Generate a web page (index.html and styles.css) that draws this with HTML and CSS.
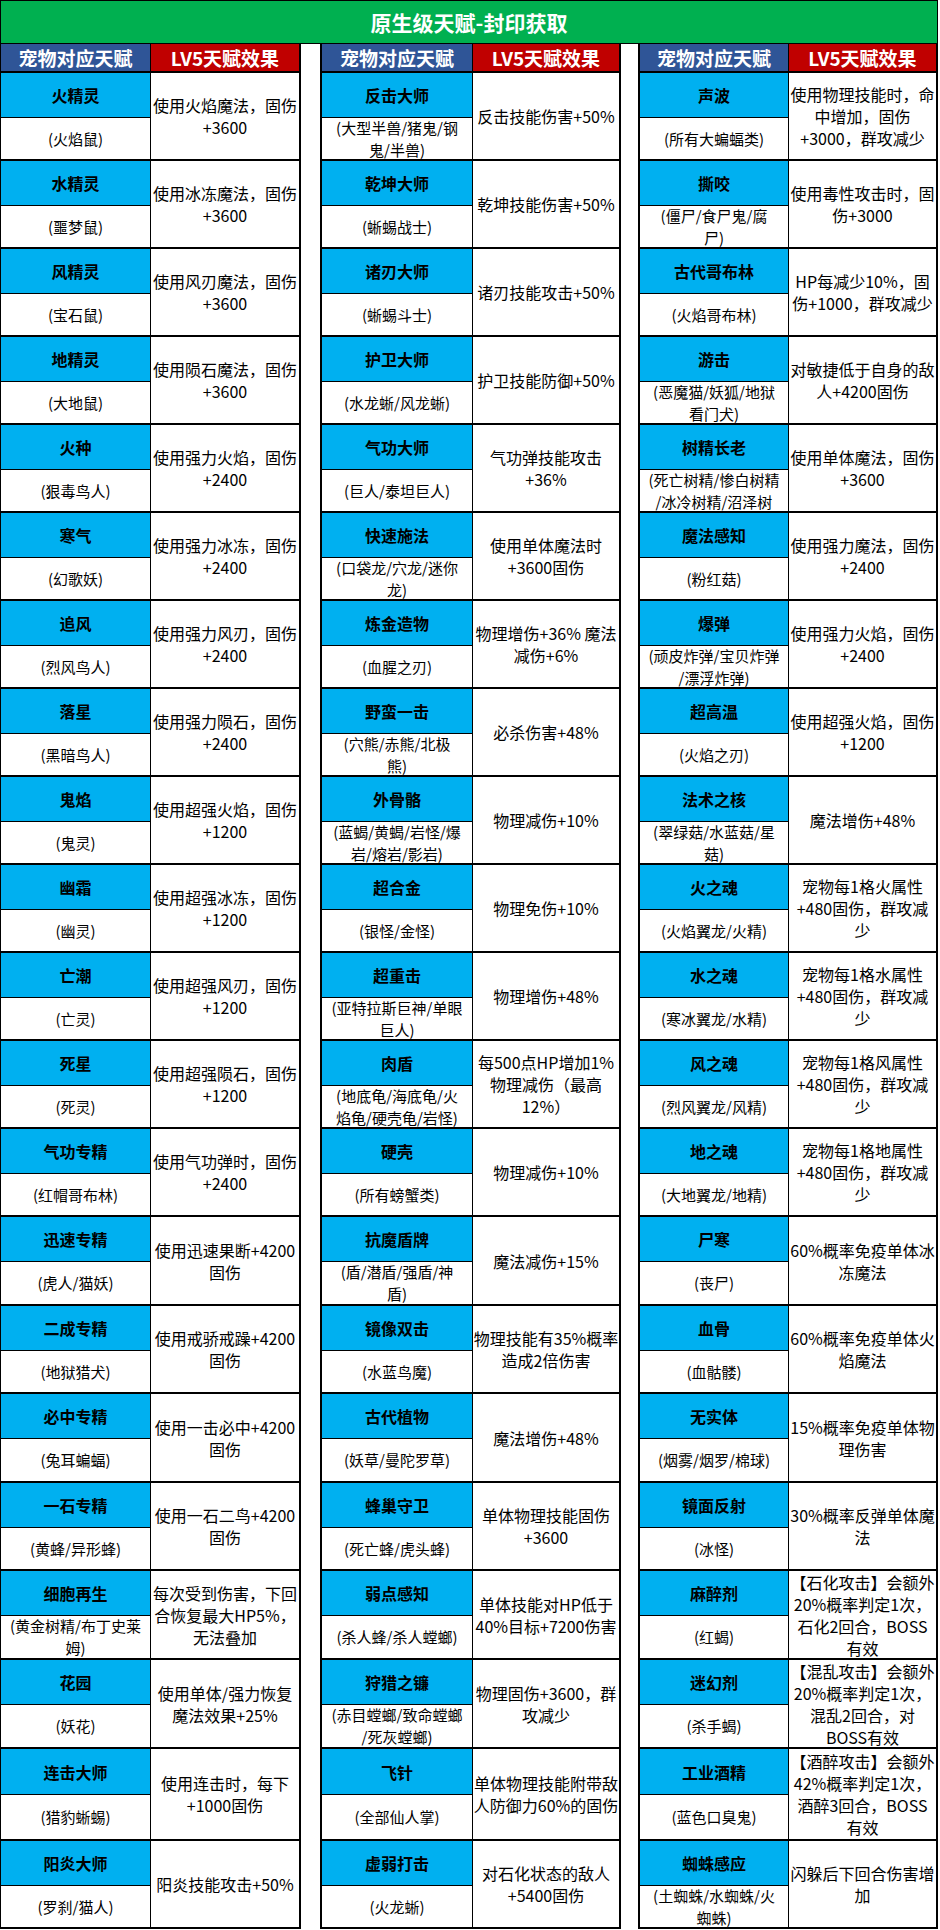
FILE: index.html
```html
<!DOCTYPE html>
<html lang="zh-CN">
<head>
<meta charset="utf-8">
<title>原生级天赋-封印获取</title>
<link rel="stylesheet" href="styles.css">
</head>
<body>
<div class="title">原生级天赋-封印获取</div>
<div class="tables">
  <div class="tbl t1">
    <div class="head"><div class="hp">宠物对应天赋</div><div class="hf">LV5天赋效果</div></div>
    <div class="e"><div class="n">火精灵</div><div class="s">(火焰鼠)</div><div class="f">使用火焰魔法，固伤<br>+3600</div></div>
    <div class="e"><div class="n">水精灵</div><div class="s">(噩梦鼠)</div><div class="f">使用冰冻魔法，固伤<br>+3600</div></div>
    <div class="e"><div class="n">风精灵</div><div class="s">(宝石鼠)</div><div class="f">使用风刃魔法，固伤<br>+3600</div></div>
    <div class="e"><div class="n">地精灵</div><div class="s">(大地鼠)</div><div class="f">使用陨石魔法，固伤<br>+3600</div></div>
    <div class="e"><div class="n">火种</div><div class="s">(狠毒鸟人)</div><div class="f">使用强力火焰，固伤<br>+2400</div></div>
    <div class="e"><div class="n">寒气</div><div class="s">(幻歌妖)</div><div class="f">使用强力冰冻，固伤<br>+2400</div></div>
    <div class="e"><div class="n">追风</div><div class="s">(烈风鸟人)</div><div class="f">使用强力风刃，固伤<br>+2400</div></div>
    <div class="e"><div class="n">落星</div><div class="s">(黑暗鸟人)</div><div class="f">使用强力陨石，固伤<br>+2400</div></div>
    <div class="e"><div class="n">鬼焰</div><div class="s">(鬼灵)</div><div class="f">使用超强火焰，固伤<br>+1200</div></div>
    <div class="e"><div class="n">幽霜</div><div class="s">(幽灵)</div><div class="f">使用超强冰冻，固伤<br>+1200</div></div>
    <div class="e"><div class="n">亡潮</div><div class="s">(亡灵)</div><div class="f">使用超强风刃，固伤<br>+1200</div></div>
    <div class="e"><div class="n">死星</div><div class="s">(死灵)</div><div class="f">使用超强陨石，固伤<br>+1200</div></div>
    <div class="e"><div class="n">气功专精</div><div class="s">(红帽哥布林)</div><div class="f">使用气功弹时，固伤<br>+2400</div></div>
    <div class="e x1"><div class="n">迅速专精</div><div class="s">(虎人/猫妖)</div><div class="f">使用迅速果断+4200<br>固伤</div></div>
    <div class="e"><div class="n">二成专精</div><div class="s">(地狱猎犬)</div><div class="f">使用戒骄戒躁+4200<br>固伤</div></div>
    <div class="e x1"><div class="n">必中专精</div><div class="s">(兔耳蝙蝠)</div><div class="f">使用一击必中+4200<br>固伤</div></div>
    <div class="e"><div class="n">一石专精</div><div class="s">(黄蜂/异形蜂)</div><div class="f">使用一石二鸟+4200<br>固伤</div></div>
    <div class="e x1"><div class="n">细胞再生</div><div class="s">(黄金树精/布丁史莱<br>姆)</div><div class="f">每次受到伤害，下回<br>合恢复最大HP5%，<br>无法叠加</div></div>
    <div class="e x1"><div class="n">花园</div><div class="s">(妖花)</div><div class="f">使用单体/强力恢复<br>魔法效果+25%</div></div>
    <div class="e x4"><div class="n">连击大师</div><div class="s">(猎豹蜥蜴)</div><div class="f">使用连击时，每下<br>+1000固伤</div></div>
    <div class="e"><div class="n">阳炎大师</div><div class="s">(罗刹/猫人)</div><div class="f">阳炎技能攻击+50%</div></div>
  </div>

  <div class="tbl t2">
    <div class="head"><div class="hp">宠物对应天赋</div><div class="hf">LV5天赋效果</div></div>
    <div class="e"><div class="n">反击大师</div><div class="s">(大型半兽/猪鬼/钢<br>鬼/半兽)</div><div class="f">反击技能伤害+50%</div></div>
    <div class="e"><div class="n">乾坤大师</div><div class="s">(蜥蜴战士)</div><div class="f">乾坤技能伤害+50%</div></div>
    <div class="e"><div class="n">诸刃大师</div><div class="s">(蜥蜴斗士)</div><div class="f">诸刃技能攻击+50%</div></div>
    <div class="e"><div class="n">护卫大师</div><div class="s">(水龙蜥/风龙蜥)</div><div class="f">护卫技能防御+50%</div></div>
    <div class="e"><div class="n">气功大师</div><div class="s">(巨人/泰坦巨人)</div><div class="f">气功弹技能攻击<br>+36%</div></div>
    <div class="e"><div class="n">快速施法</div><div class="s">(口袋龙/穴龙/迷你<br>龙)</div><div class="f">使用单体魔法时<br>+3600固伤</div></div>
    <div class="e"><div class="n">炼金造物</div><div class="s">(血腥之刃)</div><div class="f">物理增伤+36% 魔法<br>减伤+6%</div></div>
    <div class="e"><div class="n">野蛮一击</div><div class="s">(穴熊/赤熊/北极<br>熊)</div><div class="f">必杀伤害+48%</div></div>
    <div class="e"><div class="n">外骨骼</div><div class="s">(蓝蝎/黄蝎/岩怪/爆<br>岩/熔岩/影岩)</div><div class="f">物理减伤+10%</div></div>
    <div class="e"><div class="n">超合金</div><div class="s">(银怪/金怪)</div><div class="f">物理免伤+10%</div></div>
    <div class="e"><div class="n">超重击</div><div class="s">(亚特拉斯巨神/单眼<br>巨人)</div><div class="f">物理增伤+48%</div></div>
    <div class="e"><div class="n">肉盾</div><div class="s">(地底龟/海底龟/火<br>焰龟/硬壳龟/岩怪)</div><div class="f">每500点HP增加1%<br>物理减伤（最高<br>12%）</div></div>
    <div class="e"><div class="n">硬壳</div><div class="s">(所有螃蟹类)</div><div class="f">物理减伤+10%</div></div>
    <div class="e x1"><div class="n">抗魔盾牌</div><div class="s">(盾/潜盾/强盾/神<br>盾)</div><div class="f">魔法减伤+15%</div></div>
    <div class="e"><div class="n">镜像双击</div><div class="s">(水蓝鸟魔)</div><div class="f">物理技能有35%概率<br>造成2倍伤害</div></div>
    <div class="e x1"><div class="n">古代植物</div><div class="s">(妖草/曼陀罗草)</div><div class="f">魔法增伤+48%</div></div>
    <div class="e"><div class="n">蜂巢守卫</div><div class="s">(死亡蜂/虎头蜂)</div><div class="f">单体物理技能固伤<br>+3600</div></div>
    <div class="e x1"><div class="n">弱点感知</div><div class="s">(杀人蜂/杀人螳螂)</div><div class="f">单体技能对HP低于<br>40%目标+7200伤害</div></div>
    <div class="e x1"><div class="n">狩猎之镰</div><div class="s">(赤目螳螂/致命螳螂<br>/死灰螳螂)</div><div class="f">物理固伤+3600，群<br>攻减少</div></div>
    <div class="e x4"><div class="n">飞针</div><div class="s">(全部仙人掌)</div><div class="f">单体物理技能附带敌<br>人防御力60%的固伤</div></div>
    <div class="e"><div class="n">虚弱打击</div><div class="s">(火龙蜥)</div><div class="f">对石化状态的敌人<br>+5400固伤</div></div>
  </div>

  <div class="tbl t3">
    <div class="head"><div class="hp">宠物对应天赋</div><div class="hf">LV5天赋效果</div></div>
    <div class="e"><div class="n">声波</div><div class="s">(所有大蝙蝠类)</div><div class="f">使用物理技能时，命<br>中增加，固伤<br>+3000，群攻减少</div></div>
    <div class="e"><div class="n">撕咬</div><div class="s">(僵尸/食尸鬼/腐<br>尸)</div><div class="f">使用毒性攻击时，固<br>伤+3000</div></div>
    <div class="e"><div class="n">古代哥布林</div><div class="s">(火焰哥布林)</div><div class="f">HP每减少10%，固<br>伤+1000，群攻减少</div></div>
    <div class="e"><div class="n">游击</div><div class="s">(恶魔猫/妖狐/地狱<br>看门犬)</div><div class="f">对敏捷低于自身的敌<br>人+4200固伤</div></div>
    <div class="e"><div class="n">树精长老</div><div class="s">(死亡树精/惨白树精<br>/冰冷树精/沼泽树</div><div class="f">使用单体魔法，固伤<br>+3600</div></div>
    <div class="e"><div class="n">魔法感知</div><div class="s">(粉红菇)</div><div class="f">使用强力魔法，固伤<br>+2400</div></div>
    <div class="e"><div class="n">爆弹</div><div class="s">(顽皮炸弹/宝贝炸弹<br>/漂浮炸弹)</div><div class="f">使用强力火焰，固伤<br>+2400</div></div>
    <div class="e"><div class="n">超高温</div><div class="s">(火焰之刃)</div><div class="f">使用超强火焰，固伤<br>+1200</div></div>
    <div class="e"><div class="n">法术之核</div><div class="s">(翠绿菇/水蓝菇/星<br>菇)</div><div class="f">魔法增伤+48%</div></div>
    <div class="e"><div class="n">火之魂</div><div class="s">(火焰翼龙/火精)</div><div class="f">宠物每1格火属性<br>+480固伤，群攻减<br>少</div></div>
    <div class="e"><div class="n">水之魂</div><div class="s">(寒冰翼龙/水精)</div><div class="f">宠物每1格水属性<br>+480固伤，群攻减<br>少</div></div>
    <div class="e"><div class="n">风之魂</div><div class="s">(烈风翼龙/风精)</div><div class="f">宠物每1格风属性<br>+480固伤，群攻减<br>少</div></div>
    <div class="e"><div class="n">地之魂</div><div class="s">(大地翼龙/地精)</div><div class="f">宠物每1格地属性<br>+480固伤，群攻减<br>少</div></div>
    <div class="e x1"><div class="n">尸寒</div><div class="s">(丧尸)</div><div class="f">60%概率免疫单体冰<br>冻魔法</div></div>
    <div class="e"><div class="n">血骨</div><div class="s">(血骷髅)</div><div class="f">60%概率免疫单体火<br>焰魔法</div></div>
    <div class="e x1"><div class="n">无实体</div><div class="s">(烟雾/烟罗/棉球)</div><div class="f">15%概率免疫单体物<br>理伤害</div></div>
    <div class="e"><div class="n">镜面反射</div><div class="s">(冰怪)</div><div class="f">30%概率反弹单体魔<br>法</div></div>
    <div class="e x1"><div class="n">麻醉剂</div><div class="s">(红蝎)</div><div class="f">【石化攻击】会额外<br>20%概率判定1次，<br>石化2回合，BOSS<br>有效</div></div>
    <div class="e x1"><div class="n">迷幻剂</div><div class="s">(杀手蝎)</div><div class="f">【混乱攻击】会额外<br>20%概率判定1次，<br>混乱2回合，对<br>BOSS有效</div></div>
    <div class="e x4"><div class="n">工业酒精</div><div class="s">(蓝色口臭鬼)</div><div class="f">【酒醉攻击】会额外<br>42%概率判定1次，<br>酒醉3回合，BOSS<br>有效</div></div>
    <div class="e"><div class="n">蜘蛛感应</div><div class="s">(土蜘蛛/水蜘蛛/火<br>蜘蛛)</div><div class="f">闪躲后下回合伤害增<br>加</div></div>
  </div>
</div>
</body>
</html>
```

FILE: styles.css
```css
* {
  box-sizing: border-box;
  margin: 0;
  padding: 0;
}

body {
  margin: 0;
  width: 940px;
  background: #ffffff;
  color: #000000;
  font-family: "Noto Sans CJK SC", "Microsoft YaHei", sans-serif;
}

.title {
  width: 938px;
  height: 44px;
  border: 1px solid #000000;
  background: #00b050;
  color: #ffffff;
  font-size: 21px;
  font-weight: bold;
  line-height: 1;
  display: flex;
  align-items: center;
  justify-content: center;
}

.tables {
  display: flex;
  align-items: flex-start;
}

.tbl {
  border-left: 2px solid #000000;
  border-right: 2px solid #000000;
}

.t1 {
  --p: 149px;
  --q: 149px;
  border-left-width: 1px;
}

.t2 {
  --p: 150px;
  --q: 147px;
  margin-left: 19px;
}

.t3 {
  --p: 148px;
  --q: 148px;
  margin-left: 17px;
}

.head {
  display: grid;
  grid-template-columns: var(--p) var(--q);
  height: 29px;
  border-bottom: 2px solid #000000;
}

.hp,
.hf {
  color: #ffffff;
  font-size: 19px;
  font-weight: bold;
  line-height: 1;
  display: flex;
  align-items: center;
  justify-content: center;
}

.hp {
  background: #2f5597;
}

.hf {
  background: #c00000;
  border-left: 1px solid #000000;
}

.e {
  display: grid;
  grid-template-columns: var(--p) var(--q);
  grid-template-rows: 45px 41px;
  border-bottom: 2px solid #000000;
}

.e.x1 {
  grid-template-rows: 45px 42px;
}

.e.x4 {
  grid-template-rows: 46px 44px;
}

.n {
  grid-row: 1;
  grid-column: 1;
  background: #00b0f0;
  border-bottom: 1px solid #000000;
  font-size: 16px;
  font-weight: bold;
  line-height: 22px;
  display: flex;
  align-items: center;
  justify-content: center;
  white-space: nowrap;
}

.s {
  grid-row: 2;
  grid-column: 1;
  font-size: 15px;
  line-height: 22px;
  display: flex;
  align-items: center;
  justify-content: center;
  text-align: center;
  white-space: nowrap;
  overflow: hidden;
}

.f {
  grid-row: 1 / span 2;
  grid-column: 2;
  border-left: 1px solid #000000;
  font-size: 16px;
  line-height: 22px;
  display: flex;
  align-items: center;
  justify-content: center;
  text-align: center;
  white-space: nowrap;
}
```
